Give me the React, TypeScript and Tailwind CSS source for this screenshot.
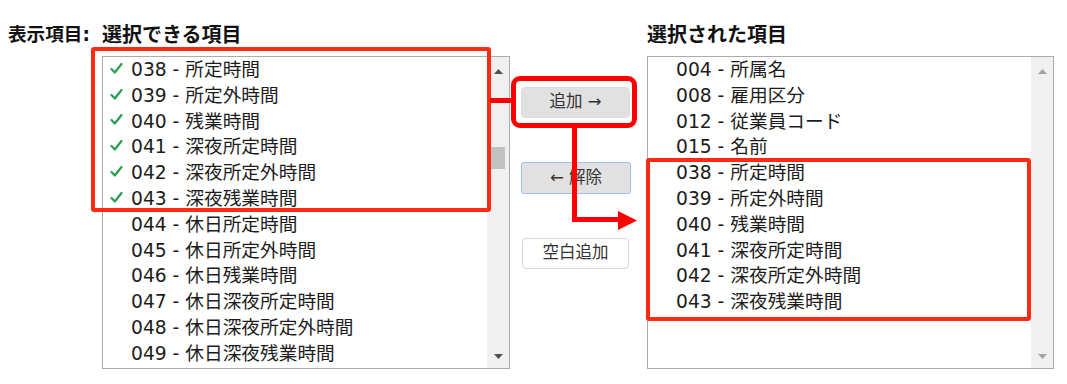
import React from "react";

type Item = { code: string; name: string; checked?: boolean };

const leftItems: Item[] = [
  { code: "038", name: "所定時間", checked: true },
  { code: "039", name: "所定外時間", checked: true },
  { code: "040", name: "残業時間", checked: true },
  { code: "041", name: "深夜所定時間", checked: true },
  { code: "042", name: "深夜所定外時間", checked: true },
  { code: "043", name: "深夜残業時間", checked: true },
  { code: "044", name: "休日所定時間" },
  { code: "045", name: "休日所定外時間" },
  { code: "046", name: "休日残業時間" },
  { code: "047", name: "休日深夜所定時間" },
  { code: "048", name: "休日深夜所定外時間" },
  { code: "049", name: "休日深夜残業時間" },
];

const rightItems: Item[] = [
  { code: "004", name: "所属名" },
  { code: "008", name: "雇用区分" },
  { code: "012", name: "従業員コード" },
  { code: "015", name: "名前" },
  { code: "038", name: "所定時間" },
  { code: "039", name: "所定外時間" },
  { code: "040", name: "残業時間" },
  { code: "041", name: "深夜所定時間" },
  { code: "042", name: "深夜所定外時間" },
  { code: "043", name: "深夜残業時間" },
];

const FONT = { fontFamily: '"DejaVu Sans", "Noto Sans CJK JP", sans-serif' };

function Check() {
  return (
    <svg width="13" height="13" viewBox="0 0 13 13" className="block">
      <polyline
        points="1.5,7 4.8,10.5 11.5,2"
        fill="none"
        stroke="#2a9d50"
        strokeWidth="2.2"
        strokeLinecap="round"
        strokeLinejoin="round"
      />
    </svg>
  );
}

function Row({ item }: { item: Item }) {
  return (
    <div className="flex items-center h-[25.8px] whitespace-nowrap">
      <div className="w-[28px] pl-[7px] flex items-center -mt-[3px]">
        {item.checked ? <Check /> : null}
      </div>
      <span className="text-[18.7px] leading-[25.8px] text-[#1c1c1c]">
        {item.code} - {item.name}
      </span>
    </div>
  );
}

function Scrollbar({ active }: { active: boolean }) {
  const c = active ? "#505050" : "#a3a3a3";
  return (
    <div className="w-[22px] bg-[#f0f0f0] flex flex-col items-center h-full">
      <div className="h-[28px] flex items-center justify-center">
        <svg width="9" height="5" viewBox="0 0 9 5">
          <polygon points="0,5 4.5,0 9,5" fill={c} />
        </svg>
      </div>
      {active ? (
        <div className="mt-[62px] w-[14px] h-[22px] bg-[#c1c1c1]" />
      ) : null}
      <div className="flex-1" />
      <div className="h-[24px] flex items-center justify-center">
        <svg width="9" height="5" viewBox="0 0 9 5">
          <polygon points="0,0 9,0 4.5,5" fill={c} />
        </svg>
      </div>
    </div>
  );
}

function ListBox({ items, active, width }: { items: Item[]; active: boolean; width: string }) {
  return (
    <div className={`${width} h-[313px] border border-[#acacac] bg-white flex overflow-hidden`}>
      <div className="flex-1 overflow-hidden">
        {items.map((it) => (
          <Row key={it.code} item={it} />
        ))}
      </div>
      <Scrollbar active={active} />
    </div>
  );
}

export default function App() {
  return (
    <div className="relative w-[1067px] h-[384px] bg-white overflow-hidden" style={FONT}>
      <div className="flex items-start pl-[8px]">
        <div className="w-[94px] pt-[21px] text-[18.6px] leading-[28px] font-bold text-[#111] whitespace-nowrap">
          表示項目:
        </div>
        <div className="flex flex-col">
          <div className="pt-[21px] mb-[7px] text-[20px] leading-[28px] font-bold text-[#111] whitespace-nowrap">
            選択できる項目
          </div>
          <ListBox items={leftItems} active={true} width="w-[408px]" />
        </div>
        <div className="w-[137px] flex flex-col items-start pl-[11px] pt-[87px] gap-[44px] text-[16.5px] text-[#333]">
          <button className="w-[109px] h-[31px] rounded-[4px] bg-[#e1e1e1] border border-[#dcdcdc] flex items-center justify-center leading-none">
            追加 →
          </button>
          <button className="w-[110px] h-[32px] rounded-[3px] bg-[#e1e1e1] border-[1.5px] border-[#9cc0f4] flex items-center justify-center leading-none">
            ← 解除
          </button>
          <button className="w-[107px] h-[31px] rounded-[4px] bg-white border border-[#d6d6d6] flex items-center justify-center leading-none ml-[1px]">
            空白追加
          </button>
        </div>
        <div className="flex flex-col">
          <div className="pt-[21px] mb-[7px] text-[20px] leading-[28px] font-bold text-[#111] whitespace-nowrap">
            選択された項目
          </div>
          <ListBox items={rightItems} active={false} width="w-[407px]" />
        </div>
      </div>

      {/* Annotation overlays */}
      <div className="absolute left-[91px] top-[47px] w-[400px] h-[165px] border-[4px] border-[#ff2a12] rounded-[3px]" />
      <div className="absolute left-[490px] top-[98px] w-[22px] h-[5px] bg-[#ff0000]" />
      <div className="absolute left-[511px] top-[76px] w-[126px] h-[52px] border-[5px] border-[#ff0000] rounded-[9px]" />
      <div className="absolute left-[572px] top-[127px] w-[5px] h-[95px] bg-[#ff0000]" />
      <div className="absolute left-[572px] top-[217px] w-[48px] h-[5px] bg-[#ff0000]" />
      <svg className="absolute left-[618px] top-[211px]" width="19" height="19" viewBox="0 0 19 19">
        <polygon points="0,0 19,9.5 0,19" fill="#ff0000" />
      </svg>
      <div className="absolute left-[646px] top-[158px] w-[385px] h-[163px] border-[4px] border-[#ff2a12] rounded-[3px]" />
    </div>
  );
}
